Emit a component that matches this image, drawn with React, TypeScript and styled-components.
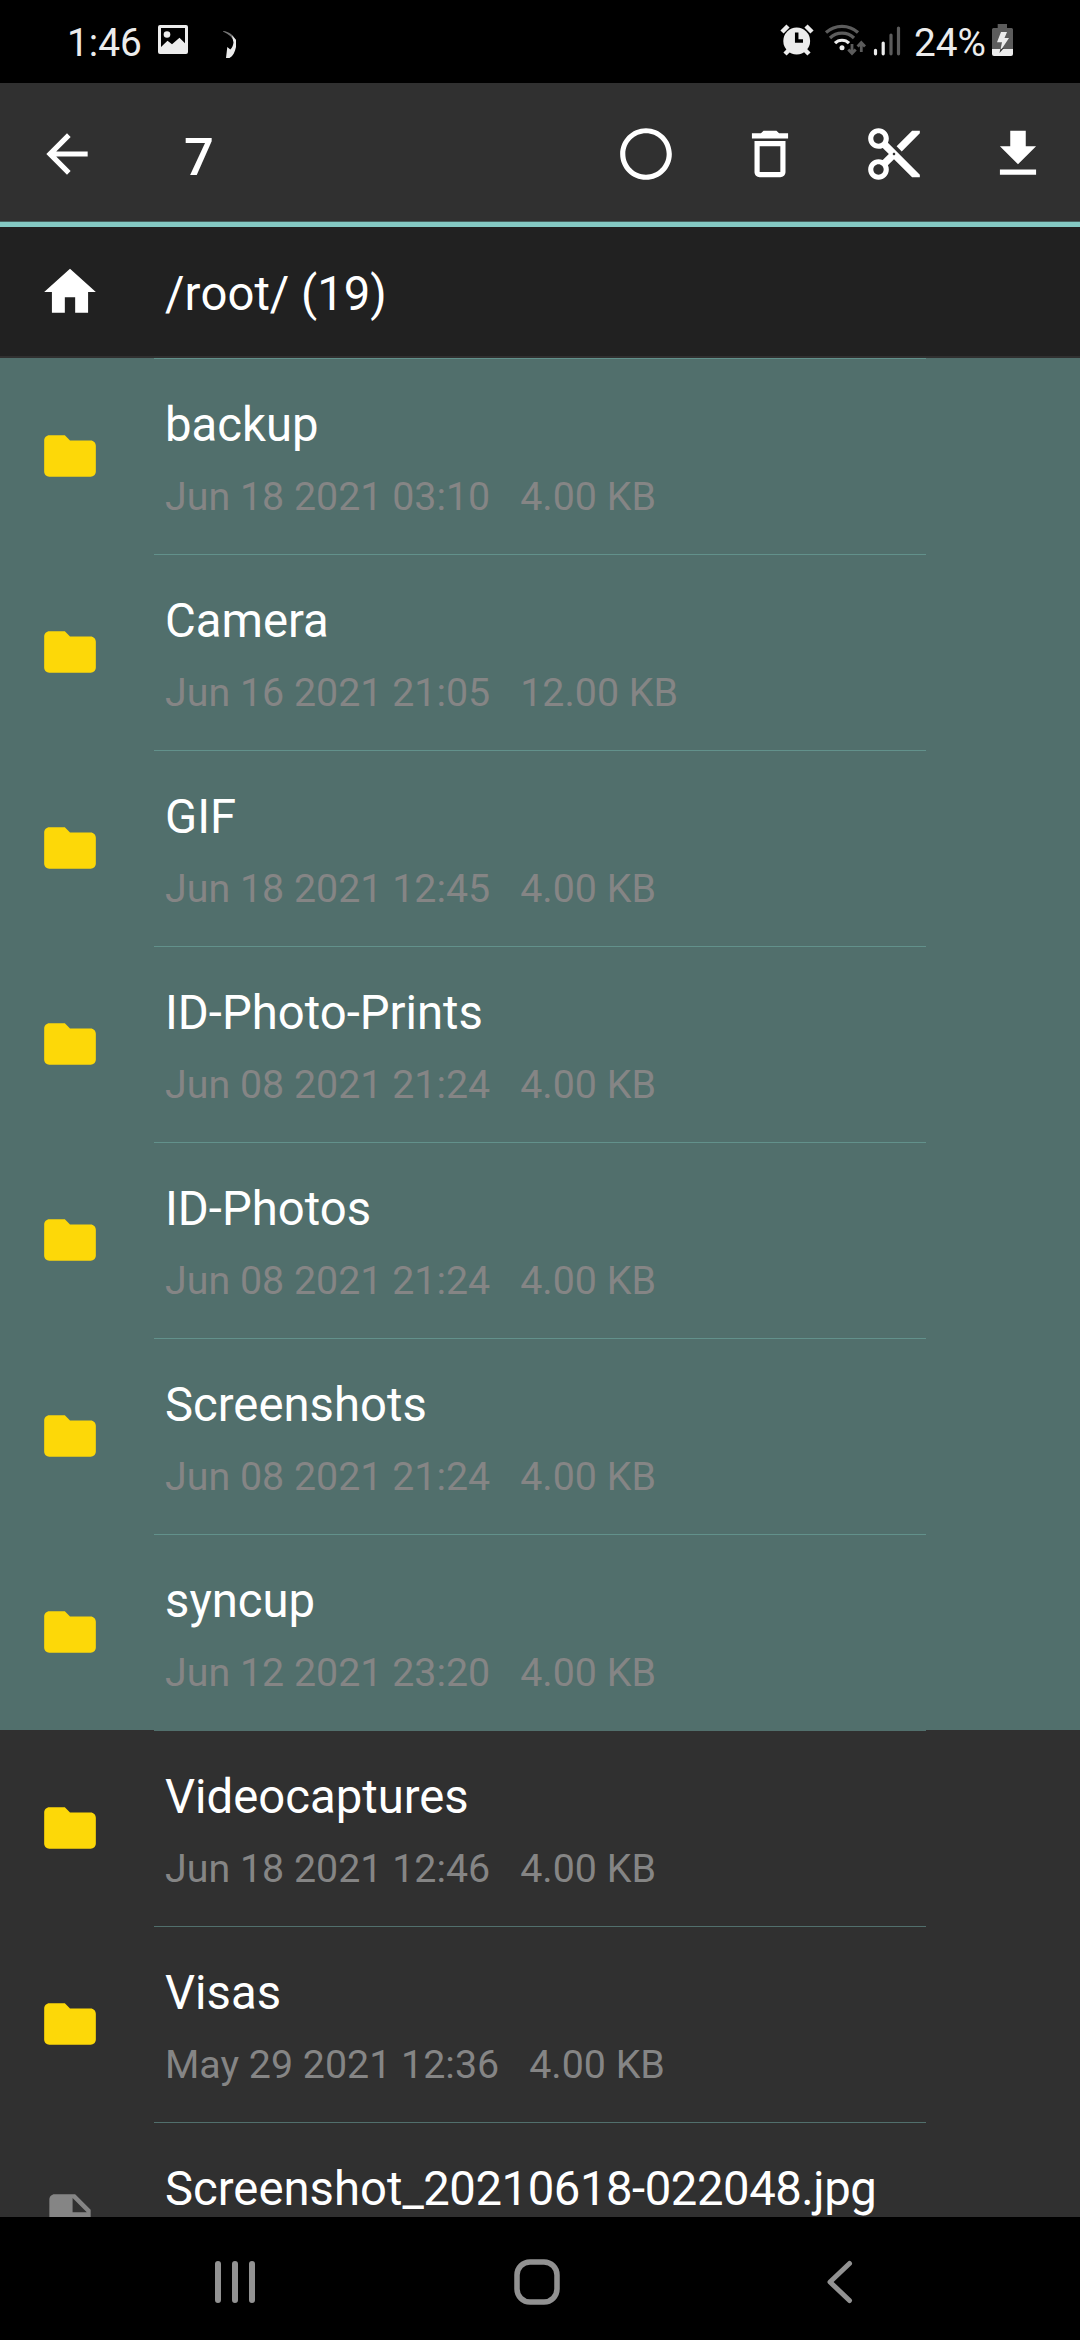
import React from 'react';
import styled, { createGlobalStyle } from 'styled-components';

const Global = createGlobalStyle`
  html, body { margin: 0; background: #000; }
  * { box-sizing: border-box; }
`;

const Screen = styled.div`
  width: 1080px;
  height: 2340px;
  display: flex;
  flex-direction: column;
  overflow: hidden;
  background: #303030;
  color: #fff;
  font-family: Roboto, sans-serif;
`;

const StatusBar = styled.header`
  flex: none;
  height: 83px;
  display: flex;
  align-items: center;
  justify-content: space-between;
  padding: 0 66px 0 67px;
  background: #000;
  color: #ececec;
  font-size: 38.8px;
  line-height: 83px;
`;

const StatusGroup = styled.div`
  display: flex;
  align-items: center;
  height: 83px;
`;

const StatusIcon = styled.svg<{ $gap?: number }>`
  flex: none;
  display: block;
  margin-left: ${(p) => p.$gap ?? 0}px;
`;

const StatusText = styled.span<{ $width: number; $gap?: number }>`
  width: ${(p) => p.$width}px;
  margin-left: ${(p) => p.$gap ?? 0}px;
  padding-top: 2px;
  white-space: nowrap;
`;

const Toolbar = styled.div`
  flex: none;
  height: 144px;
  display: flex;
  align-items: center;
  padding: 3px 31px 0 36px;
  border-bottom: 5px solid #84c9c3;
  box-shadow: inset 0 -1px 0 #47605e;
`;

const Title = styled.h1`
  flex: 1;
  margin: 0;
  padding: 5px 0 0 86px;
  font-size: 52.5px;
  font-weight: 500;
  line-height: 62px;
`;

const Actions = styled.div`
  display: flex;
  gap: 62px;
`;

const Glyph = styled.svg`
  flex: none;
  display: block;
  width: 62px;
  height: 62px;
  fill: currentColor;
`;

const PathBar = styled.div`
  flex: none;
  height: 131px;
  display: flex;
  align-items: center;
  padding-left: 39px;
  gap: 64px;
  background: #212121;
  border-bottom: 2px solid #303030;
  font-size: 47.25px;
  line-height: 56px;
`;

const PathText = styled.span`
  padding-top: 4px;
  font-kerning: none;
`;

const List = styled.main`
  flex: 1;
  min-height: 0;
  overflow: hidden;
`;

const Row = styled.div<{ $selected: boolean }>`
  height: 196px;
  display: flex;
  align-items: center;
  padding-left: 39px;
  background: ${(p) => (p.$selected ? '#516f6c' : 'transparent')};
`;

const RowGlyph = styled(Glyph)<{ $tone: string }>`
  color: ${(p) => p.$tone};
`;

const Details = styled.div<{ $line: string }>`
  width: 772px;
  height: 196px;
  margin-left: 53px;
  padding: 38px 0 0 11px;
  border-top: 1px solid ${(p) => p.$line};
`;

const Name = styled.div`
  font-size: 47.25px;
  line-height: 56px;
  white-space: nowrap;
`;

const Suffix = styled.span`
  letter-spacing: -0.45px;
`;

const Meta = styled.div`
  display: flex;
  gap: 30px;
  margin-top: 21px;
  color: #858585;
  font-size: 39.375px;
  line-height: 46px;
  white-space: nowrap;
`;

const NavBar = styled.nav`
  flex: none;
  height: 123px;
  background: #000;
  display: flex;
  padding: 42px 0 0 213px;
`;

const NavGlyph = styled.svg<{ $gap?: number }>`
  display: block;
  margin-left: ${(p) => p.$gap ?? 0}px;
  fill: none;
  stroke: #929292;
  stroke-linecap: round;
  stroke-linejoin: round;
`;

const paths = {
  back: 'M20 11H7.83l5.59-5.59L12 4l-8 8 8 8 1.41-1.41L7.83 13H20v-2z',
  circle:
    'M12 2C6.48 2 2 6.48 2 12s4.48 10 10 10 10-4.48 10-10S17.52 2 12 2zm0 18c-4.42 0-8-3.58-8-8s3.58-8 8-8 8 3.58 8 8-3.58 8-8 8z',
  trash:
    'M6 19c0 1.1.9 2 2 2h8c1.1 0 2-.9 2-2V7H6v12zM8 9h8v10H8V9zm7.5-5l-1-1h-5l-1 1H5v2h14V4z',
  cut: 'M9.64 7.64c.23-.5.36-1.05.36-1.64 0-2.21-1.79-4-4-4S2 3.79 2 6s1.79 4 4 4c.59 0 1.14-.13 1.64-.36L10 12l-2.36 2.36C7.14 14.13 6.59 14 6 14c-2.21 0-4 1.79-4 4s1.79 4 4 4 4-1.79 4-4c0-.59-.13-1.14-.36-1.64L12 14l7 7h3v-1L9.64 7.64zM6 8c-1.1 0-2-.89-2-2s.9-2 2-2 2 .89 2 2-.9 2-2 2zm0 12c-1.1 0-2-.89-2-2s.9-2 2-2 2 .89 2 2-.9 2-2 2zm6-7.5c-.28 0-.5-.22-.5-.5s.22-.5.5-.5.5.22.5.5-.22.5-.5.5zM19 3l-6 6 2 2 7-7V3z',
  download: 'M19 9h-4V3H9v6H5l7 7 7-7zM5 18v2h14v-2H5z',
  home: 'M10 20v-6h4v6h5v-8h3L12 3 2 12h3v8z',
  folder:
    'M10 4H4c-1.1 0-1.99.9-1.99 2L2 18c0 1.1.9 2 2 2h16c1.1 0 2-.9 2-2V8c0-1.1-.9-2-2-2h-8l-2-2z',
  file: 'M6 2c-1.1 0-1.99.9-1.99 2L4 20c0 1.1.89 2 1.99 2H18c1.1 0 2-.9 2-2V8l-6-6H6zm7 7V3.5L18.5 9H13z',
};

interface Entry {
  name: string;
  suffix?: string;
  date: string;
  size: string;
  selected?: boolean;
  kind?: 'folder' | 'file';
}

const entries: Entry[] = [
  { name: 'backup', date: 'Jun 18 2021 03:10', size: '4.00 KB', selected: true },
  { name: 'Camera', date: 'Jun 16 2021 21:05', size: '12.00 KB', selected: true },
  { name: 'GIF', date: 'Jun 18 2021 12:45', size: '4.00 KB', selected: true },
  { name: 'ID-Photo-Prints', date: 'Jun 08 2021 21:24', size: '4.00 KB', selected: true },
  { name: 'ID-Photos', date: 'Jun 08 2021 21:24', size: '4.00 KB', selected: true },
  { name: 'Screenshots', date: 'Jun 08 2021 21:24', size: '4.00 KB', selected: true },
  { name: 'syncup', date: 'Jun 12 2021 23:20', size: '4.00 KB', selected: true },
  { name: 'Videocaptures', date: 'Jun 18 2021 12:46', size: '4.00 KB' },
  { name: 'Visas', date: 'May 29 2021 12:36', size: '4.00 KB' },
  { name: 'Screenshot', suffix: '_20210618-022048.jpg', date: '', size: '', kind: 'file' },
];

function Icon({ d }: { d: string }) {
  return (
    <Glyph viewBox="0 0 24 24">
      <path d={d} />
    </Glyph>
  );
}

function Status() {
  return (
    <StatusBar>
      <StatusGroup>
        <StatusText $width={91}>1:46</StatusText>
        <StatusIcon width="30" height="83" viewBox="158 0 30 83">
          <path
            fill="#ececec"
            fillRule="evenodd"
            d="M160 25h26a2 2 0 0 1 2 2v25a2 2 0 0 1-2 2h-26a2 2 0 0 1-2-2V27a2 2 0 0 1 2-2zm1 3v19l6.500-6.300 4.500 3.500 7.500-6.500 5.500 5.500V28z"
          />
          <circle cx="167" cy="34.5" r="3.3" fill="#ececec" />
        </StatusIcon>
        <StatusIcon $gap={34} width="16" height="83" viewBox="222 0 16 83">
          <path fill="#777" d="M223 31c6 .5 10 4 13 9l-1 3c-2-5-6-9-12-11.500z" />
          <path fill="#ececec" d="M232 35.500l4 4.500v7c-1 5-3 9-6.500 11H226l1.300-11 3 2.500c2-2 3-4.500 3.200-7z" />
        </StatusIcon>
      </StatusGroup>
      <StatusGroup>
        <StatusIcon width="34" height="83" viewBox="780 0 34 83">
          <g stroke="#ececec" strokeWidth="4.5" fill="none">
            <path d="M782 32l6-6M812 32l-6-6M785 54l5-5M809 54l-5-5" />
          </g>
          <circle cx="796.7" cy="41" r="13.4" fill="#ececec" />
          <path d="M796.7 32.500v8.500h6.300" fill="none" stroke="#000" strokeWidth="3.5" />
        </StatusIcon>
        <StatusIcon $gap={10} width="42" height="83" viewBox="824 0 42 83">
          <g fill="none" strokeWidth="3.2">
            <path stroke="#5c5c5c" d="M826 32.500a24 24 0 0 1 32 0M830 38a17 17 0 0 1 24 0" />
            <path stroke="#ececec" d="M835 43.200a9.800 9.800 0 0 1 14 0" />
          </g>
          <circle cx="842" cy="47.700" r="2.500" fill="#ececec" />
          <path
            fill="none"
            stroke="#5c5c5c"
            strokeWidth="2.800"
            d="M852 44v9.500M848.300 49.500l3.700 4 3.700-4M861.300 52v-9.500M857.600 46.500l3.700-4 3.700 4"
          />
        </StatusIcon>
        <StatusIcon $gap={7} width="28" height="83" viewBox="873 0 28 83">
          <g strokeWidth="3.200" strokeLinecap="round">
            <path stroke="#ececec" d="M875.500 50.300v3.500M883.200 43v10.800" />
            <path stroke="#5c5c5c" d="M891 35v18.800M898.500 28v25.800" />
          </g>
        </StatusIcon>
        <StatusText $gap={13} $width={78}>24%</StatusText>
        <StatusIcon width="22" height="83" viewBox="992 0 22 83">
          <path fill="#5c5c5c" d="M997.700 24h9.300v4h4.500a1.500 1.500 0 0 1 1.500 1.500V49h-21V29.500a1.500 1.500 0 0 1 1.500-1.500h4.200z" />
          <path fill="#ececec" d="M992 49h21v5a2 2 0 0 1-2 2h-17a2 2 0 0 1-2-2z" />
          <path fill="#333" d="M1000.500 48h3.500l-4.500 5z" />
          <path fill="#ececec" d="M1001 32h6l-2.500 6h4.500l-7 10.500-1.500 1 1.500-7.200h-5z" />
        </StatusIcon>
      </StatusGroup>
    </StatusBar>
  );
}

export default function App() {
  return (
    <Screen>
      <Global />
      <Status />
      <Toolbar>
        <Icon d={paths.back} />
        <Title>7</Title>
        <Actions>
          <Icon d={paths.circle} />
          <Icon d={paths.trash} />
          <Icon d={paths.cut} />
          <Icon d={paths.download} />
        </Actions>
      </Toolbar>
      <PathBar>
        <Icon d={paths.home} />
        <PathText>/root/ (19)</PathText>
      </PathBar>
      <List>
        {entries.map((e) => (
          <Row key={e.name} $selected={!!e.selected}>
            <RowGlyph viewBox="0 0 24 24" $tone={e.kind === 'file' ? '#858585' : '#fdd808'}>
              <path d={paths[e.kind ?? 'folder']} />
            </RowGlyph>
            <Details $line={e.selected ? '#62918b' : '#516f6c'}>
              <Name>
                {e.name}
                {e.suffix && <Suffix>{e.suffix}</Suffix>}
              </Name>
              <Meta>
                <span>{e.date}</span>
                <span>{e.size}</span>
              </Meta>
            </Details>
          </Row>
        ))}
      </List>
      <NavBar>
        <NavGlyph width="44" height="46" viewBox="213 2259 44 46" strokeWidth="6">
          <path d="M218 2264v36M235 2264v36M252 2264v36" />
        </NavGlyph>
        <NavGlyph $gap={257} width="46" height="46" viewBox="514 2259 46 46" strokeWidth="5.500">
          <rect x="517" y="2262" width="40" height="40" rx="13" />
        </NavGlyph>
        <NavGlyph $gap={267} width="27" height="46" viewBox="827 2259 27 46" strokeWidth="5">
          <path d="M849.500 2263.500L830 2282l19.500 18.500" />
        </NavGlyph>
      </NavBar>
    </Screen>
  );
}
